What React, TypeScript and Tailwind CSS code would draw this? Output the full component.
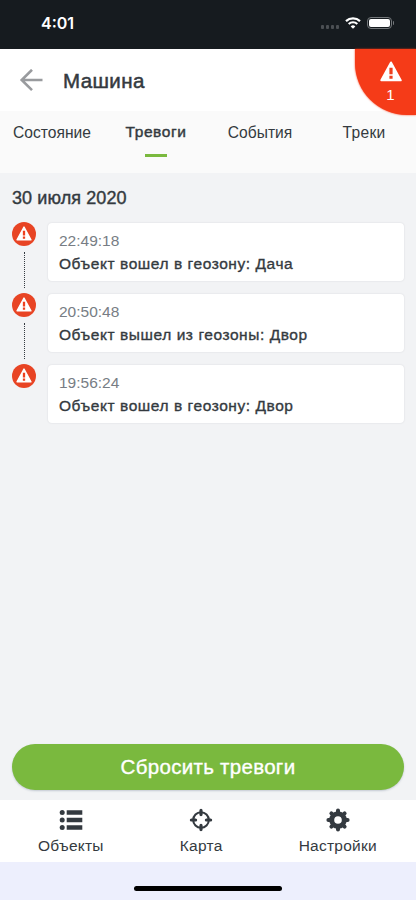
import type {ReactNode} from 'react'
import clsx from 'clsx'

type Alarm = {
	time: string
	text: string
}

const tabs = ['Состояние', 'Тревоги', 'События', 'Треки']

const alarms: Alarm[] = [
	{time: '22:49:18', text: 'Объект вошел в геозону: Дача'},
	{time: '20:50:48', text: 'Объект вышел из геозоны: Двор'},
	{time: '19:56:24', text: 'Объект вошел в геозону: Двор'},
]

const WarningIcon = ({className}: {className?: string}) => (
	<svg viewBox="0 0 22 21" className={className} fill="none">
		<path d="M11 1.5 L20.7 19.3 H1.3 Z" fill="currentColor" stroke="currentColor" strokeWidth="2" strokeLinejoin="round" />
		<path d="M9.4 6.8h3.2v6.4H9.4zM9.4 14.8h3.2v3H9.4z" className="fill-[#ee3f1e]" />
	</svg>
)

const ListIcon = () => (
	<svg viewBox="0 0 24 24" className="size-6" fill="currentColor">
		<circle cx="3.2" cy="4.5" r="2.5" />
		<circle cx="3.2" cy="12" r="2.5" />
		<circle cx="3.2" cy="19.5" r="2.5" />
		<path d="M7.7 2.3h15.6v4.4H7.7zM7.7 9.8h15.6v4.4H7.7zM7.7 17.3h15.6v4.4H7.7z" />
	</svg>
)

const LocateIcon = () => (
	<svg viewBox="0 0 24 24" className="size-6" fill="none" stroke="currentColor">
		<circle cx="12" cy="12" r="7.8" strokeWidth="2.1" />
		<path d="M12 2.4v4.2M12 17.4v4.2M2.4 12h4.2M17.4 12h4.2" strokeWidth="3.2" strokeLinecap="round" />
	</svg>
)

const GearIcon = () => (
	<svg viewBox="0 0 24 24" className="size-6" fill="none" stroke="currentColor">
		<circle cx="12" cy="12" r="6.3" strokeWidth="5" />
		<path
			d="M12 4.5V2.4M12 19.5v2.1M4.5 12H2.4M19.5 12h2.1M6.7 6.7 5.4 5.4M17.3 6.7l1.3-1.3M6.7 17.3l-1.3 1.3M17.3 17.3l1.3 1.3"
			strokeWidth="4"
			strokeLinecap="round"
		/>
	</svg>
)

const StatusBar = () => (
	<div className="flex h-[49px] shrink-0 items-center justify-between bg-[#161b1f] pr-[22px] pb-[3px] pl-[41px] text-white">
		<span className="font-['Inter',sans-serif] text-[16px] font-semibold">4:01</span>
		<div className="flex items-center">
			<div className="mt-2 mr-[6px] flex gap-[2px]">
				{[0, 1, 2, 3].map(dot => (
					<span key={dot} className="h-[4px] w-[3px] rounded-[1px] bg-[#4b4f53]" />
				))}
			</div>
			<svg viewBox="0 0 16 12" className="h-3 w-4" fill="none" stroke="currentColor">
				<path d="M1 4.1a10.2 10.2 0 0 1 14 0" strokeWidth="2.2" />
				<path d="M3.7 7a6.3 6.3 0 0 1 8.6 0" strokeWidth="2.1" />
				<path d="M8 11.8 5.7 9.4a3.4 3.4 0 0 1 4.6 0Z" fill="currentColor" stroke="none" />
			</svg>
			<div className="ml-[6px] flex h-3 w-[25px] rounded-[4px] border border-[#73777a] p-px">
				<span className="flex-1 rounded-[2px] bg-white" />
			</div>
			<span className="ml-px h-1 w-px rounded-r bg-[#73777a]" />
		</div>
	</div>
)

const AlarmRow = ({alarm, last}: {alarm: Alarm, last: boolean}) => (
	<li className="flex h-[71px] gap-3">
		<div className="flex w-6 flex-col items-center">
			<span className="flex size-6 shrink-0 justify-center rounded-full bg-[#e84424] pt-[4px] text-white">
				<WarningIcon className="h-[15px] w-[16px]" />
			</span>
			{!last && <span className="mt-[6px] h-[36px] border-l border-dotted border-[#343a40]" />}
		</div>
		<div className="mt-px h-[58px] flex-1 rounded-[4px] bg-white px-[11px] pt-[7px] shadow-[0_0_2px_rgba(40,50,70,0.14)]">
			<p className="text-[15.5px] leading-[22px] text-[#777d84]">{alarm.time}</p>
			<p className="text-[15.5px] leading-[23px] tracking-[0.56px] [-webkit-text-stroke:0.35px]">{alarm.text}</p>
		</div>
	</li>
)

const NavItem = ({icon, label}: {icon: ReactNode, label: string}) => (
	<div className="flex flex-col items-center gap-[3px]">
		{icon}
		<span className="text-[15.5px] leading-[22px] tracking-[0.25px]">{label}</span>
	</div>
)

const App = () => (
	<div className="relative flex h-[900px] w-[416px] flex-col overflow-hidden bg-[#f2f3f5] font-['Liberation_Sans',sans-serif] text-[#343a40]">
		<StatusBar />

		<header className="flex h-[62px] shrink-0 items-center bg-white pt-px pl-[19px]">
			<svg viewBox="0 0 24 24" className="h-6 w-6 text-[#999b9e]" fill="none" stroke="currentColor" strokeWidth="2.6">
				<path d="M23.5 11H3M13 .8 2.7 11 13 21.2" />
			</svg>
			<h1 className="ml-5 text-[20.5px] leading-6 tracking-[0.4px] [-webkit-text-stroke:0.5px]">Машина</h1>
		</header>

		<nav className="grid h-[62px] shrink-0 grid-cols-4 bg-[#fafafa] text-[15.6px] leading-[22px]">
			{tabs.map(tab => (
				<div key={tab} className={clsx('flex flex-col items-center', tab === 'Тревоги' ? 'pt-[10px]' : 'pt-[11px]')}>
					<span className={clsx(tab === 'Тревоги' && 'text-[15.5px] tracking-[0.6px] [-webkit-text-stroke:0.45px]', tab === 'Треки' && 'tracking-[0.3px]')}>
						{tab}
					</span>
					{tab === 'Тревоги' && <span className="mt-[11px] h-[3px] w-[22px] bg-[#7ab93e]" />}
				</div>
			))}
		</nav>

		<div className="absolute top-[49px] right-0 flex h-[66px] w-[61px] flex-col items-center rounded-bl-[52px] bg-[#f53b18] pt-[12px] pl-[10px] text-white shadow-[0_0_2px_#f53b18]">
			<WarningIcon className="h-[21px] w-[22px]" />
			<span className="mt-[3px] text-[15px] leading-[20px]">1</span>
		</div>

		<main className="flex flex-1 flex-col px-3 pt-[14px] pb-[10px]">
			<h2 className="text-[18px] leading-[22px] tracking-[0.1px] [-webkit-text-stroke:0.4px]">30 июля 2020</h2>
			<ul className="mt-[13px]">
				{alarms.map((alarm, i) => (
					<AlarmRow key={alarm.time} alarm={alarm} last={i === alarms.length - 1} />
				))}
			</ul>
			<button className="mt-auto h-[46px] rounded-full bg-[#7ab93e] pt-px text-[20.5px] tracking-[0.3px] text-white shadow-[0_1px_2px_rgba(60,80,110,0.25)] [-webkit-text-stroke:0.35px]">
				Сбросить тревоги
			</button>
		</main>

		<footer className="flex h-[62px] shrink-0 justify-around bg-white pt-[8px] pr-px">
			<NavItem icon={<ListIcon />} label="Объекты" />
			<NavItem icon={<LocateIcon />} label="Карта" />
			<NavItem icon={<GearIcon />} label="Настройки" />
		</footer>
		<div className="flex h-[38px] shrink-0 justify-center bg-[#edeffd] pt-[24px]">
			<span className="h-[5px] w-[148px] rounded-full bg-black" />
		</div>
	</div>
)

export default App
